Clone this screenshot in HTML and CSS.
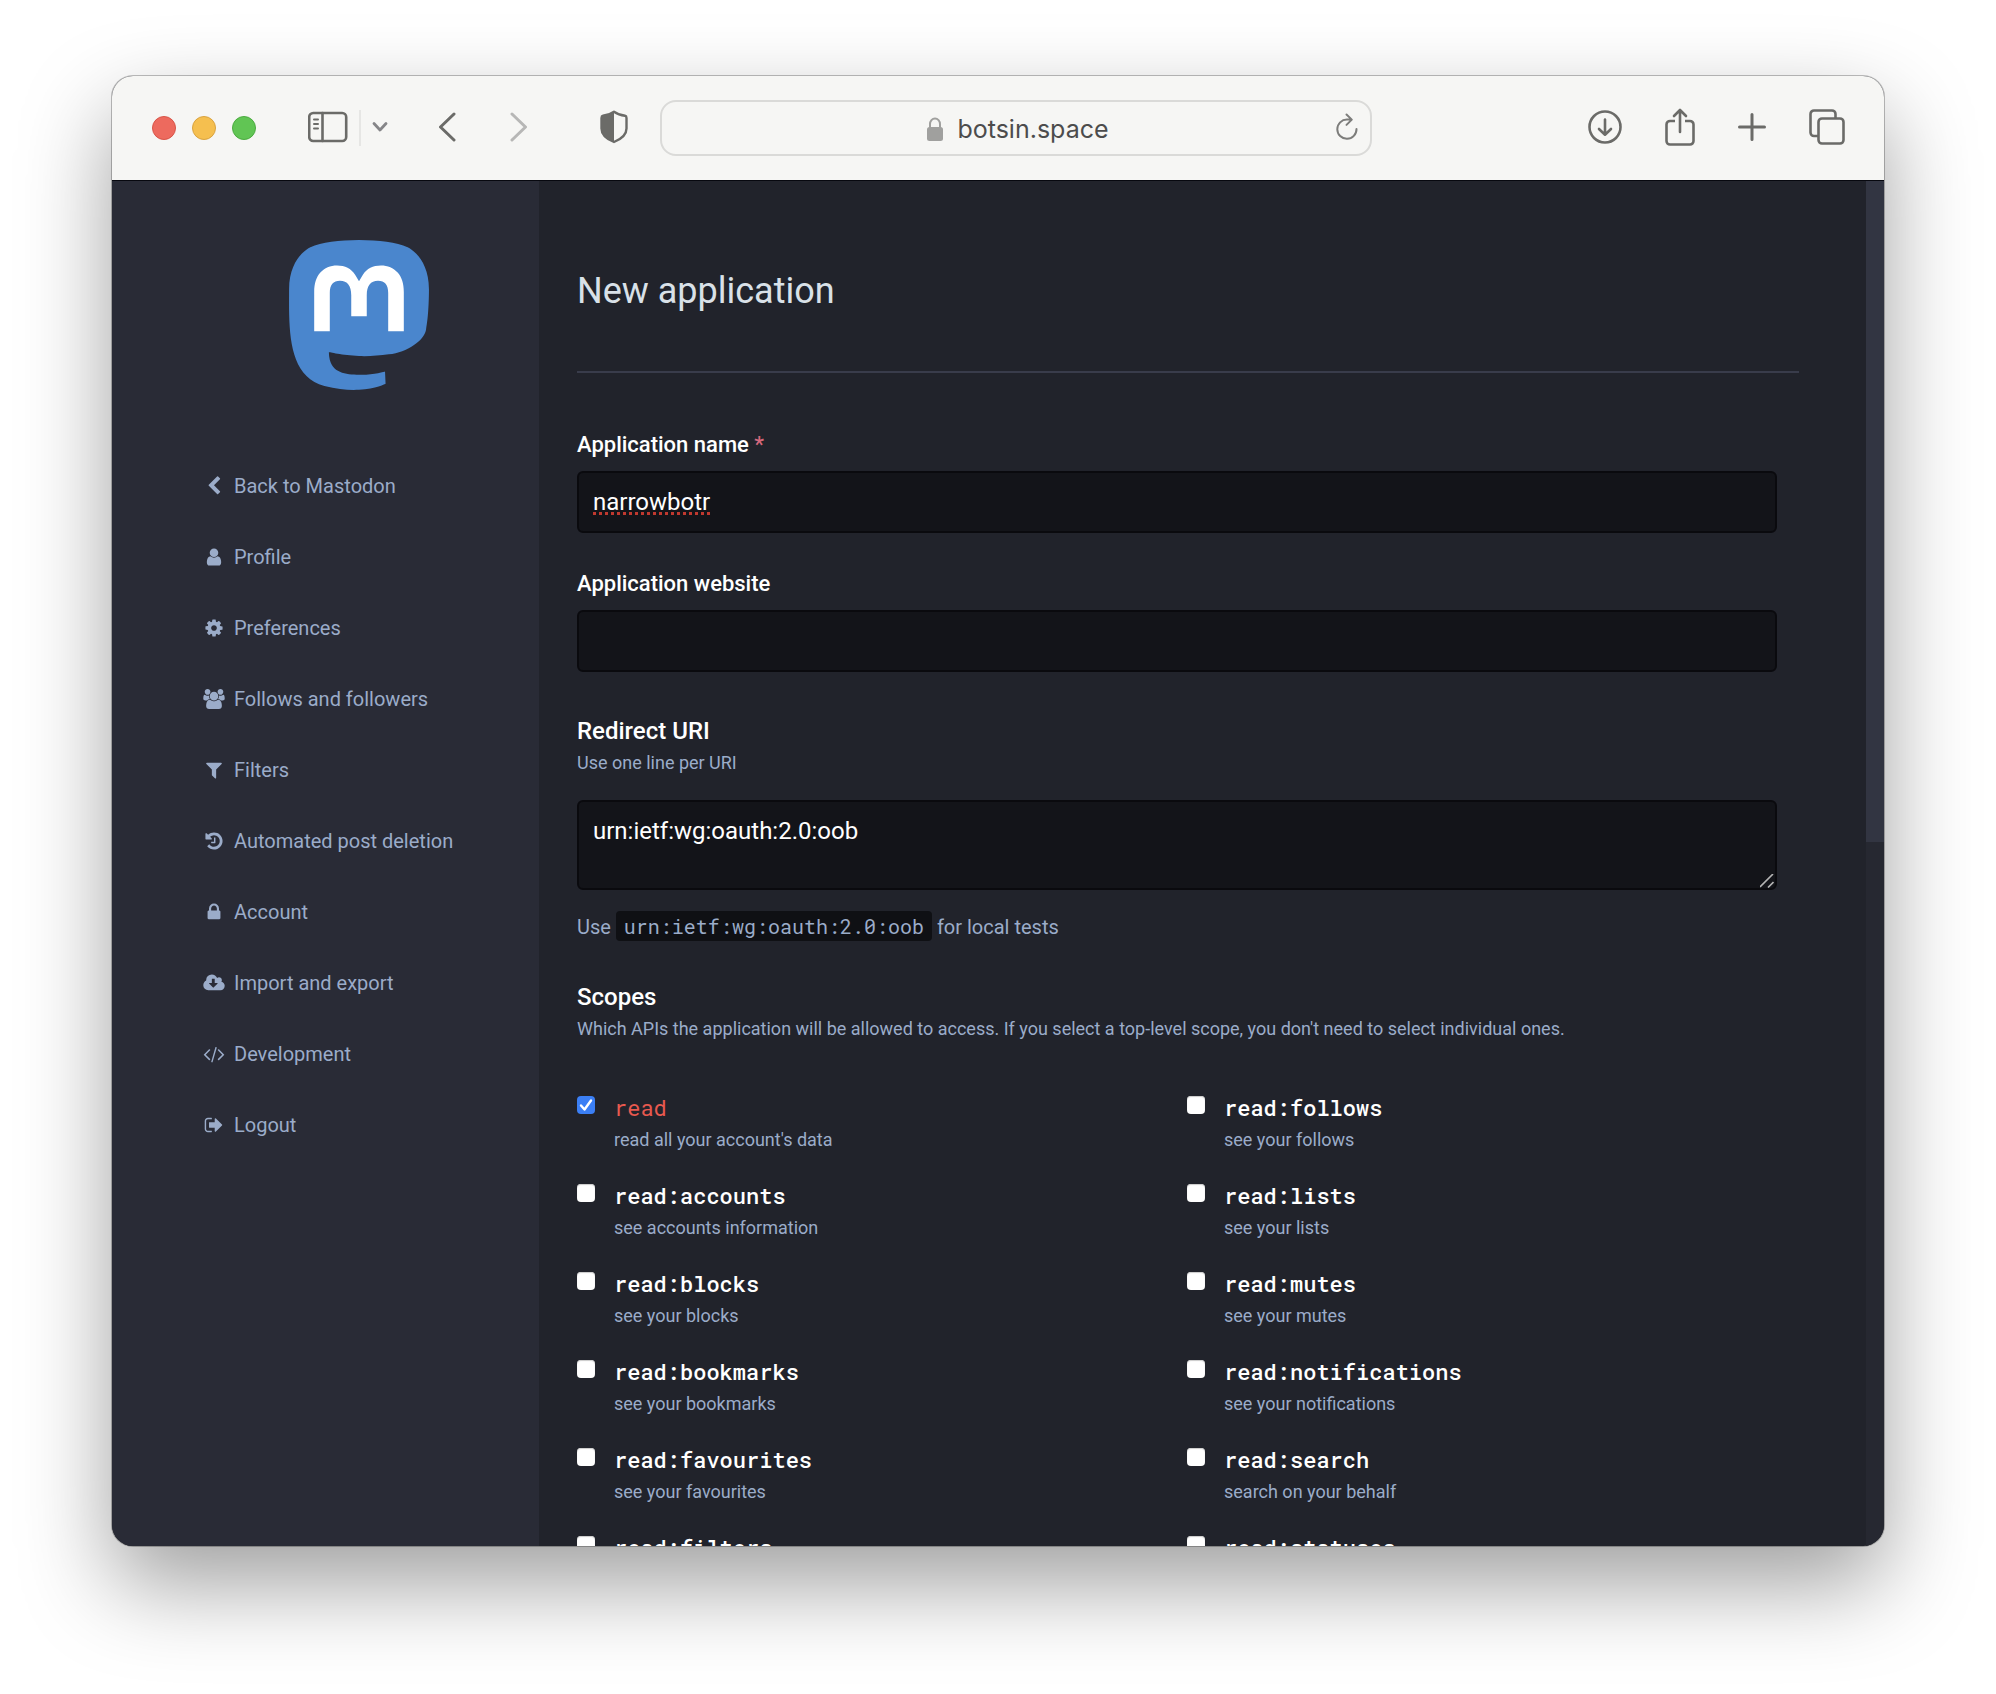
FILE: index.html
```html
<!DOCTYPE html>
<html lang="en">
<head>
<meta charset="utf-8">
<title>New application - botsin.space</title>
<link rel="stylesheet" href="styles.css">
</head>
<body>
<div class="window">
  <header class="toolbar">
    <div class="lights"><span class="light close"></span><span class="light minimise"></span><span class="light maximise"></span></div>
    <div class="side-tools">
      <button type="button" class="tool" aria-label="Show sidebar"><svg width="40" height="32" viewBox="0 0 40 32" fill="none" stroke="currentColor" stroke-width="2.6" stroke-linecap="round"><rect x="1.2" y="2" width="37" height="28" rx="4"/><path d="M14.5 2v28"/><path stroke-width="2" d="M6 8.500h4M6 13h4M6 17.500h4"/></svg></button>
      <span class="divider"></span>
      <button type="button" class="tool soft" aria-label="Tab groups"><svg width="16" height="12" viewBox="0 0 16 12" fill="none" stroke="currentColor" stroke-width="2.8" stroke-linecap="round" stroke-linejoin="round"><path d="M2 2.500l6 6.500 6-6.500"/></svg></button>
    </div>
    <div class="history">
      <button type="button" class="tool" aria-label="Back"><svg width="18" height="32" viewBox="0 0 18 32" fill="none" stroke="currentColor" stroke-width="3" stroke-linecap="round" stroke-linejoin="round"><path d="M16 3L2.500 16 16 29"/></svg></button>
      <button type="button" class="tool faded" aria-label="Forward"><svg width="18" height="32" viewBox="0 0 18 32" fill="none" stroke="currentColor" stroke-width="3" stroke-linecap="round" stroke-linejoin="round"><path d="M2 3L15.500 16 2 29"/></svg></button>
    </div>
    <button type="button" class="tool" aria-label="Privacy report"><svg width="28" height="34" viewBox="0 0 28 34"><path d="M14 1.800C11 4 6 5.500 3 5.800 1.900 6 1.500 6.700 1.500 8v10.500c0 6 5 10.500 12.500 13.500 7.500-3 12.500-7.500 12.500-13.500V8c0-1.300-.4-2-1.500-2.200C22 5.500 17 4 14 1.800z" fill="none" stroke="currentColor" stroke-width="2.400" stroke-linejoin="round"/><path d="M14 1.800C11 4 6 5.500 3 5.800 1.900 6 1.500 6.700 1.500 8v10.500c0 6 5 10.500 12.500 13.500z" fill="currentColor"/></svg></button>
    <div class="address">
      <span class="site"><svg width="16" height="24" viewBox="0 0 16 24"><rect y="10" width="16" height="14" rx="2.500" fill="#a0a09e"/><path d="M3 11V7a5 5.500 0 0 1 10 0v4" fill="none" stroke="#a0a09e" stroke-width="2"/></svg>botsin.space</span>
      <button type="button" class="tool reload" aria-label="Reload"><svg width="22" height="28" viewBox="0 0 22 28" fill="none" stroke="currentColor" stroke-width="2" stroke-linecap="round" stroke-linejoin="round"><path d="M20.500 16A9.600 9.600 0 1 1 11 6.600h4.500M10.500 1.500l5.300 5.100-5.300 5.300"/></svg></button>
    </div>
    <div class="actions">
      <button type="button" class="tool" aria-label="Downloads"><svg width="34" height="34" viewBox="0 0 34 34" fill="none" stroke="currentColor" stroke-width="2.600" stroke-linecap="round" stroke-linejoin="round"><circle cx="17" cy="17" r="15.500"/><path d="M17 9.500v15M11 19l6 5.700 6-5.700"/></svg></button>
      <button type="button" class="tool" aria-label="Share"><svg width="30" height="38" viewBox="0 0 30 38" fill="none" stroke="currentColor" stroke-width="2.600" stroke-linecap="round" stroke-linejoin="round"><path stroke-linecap="butt" d="M10 13H5a3.500 3.500 0 0 0-3.500 3.500v16.500A3.500 3.500 0 0 0 5 36.500h20a3.500 3.500 0 0 0 3.500-3.500v-16.500A3.500 3.500 0 0 0 25 13h-5"/><path d="M15 2v22M9 8l6-6 6 6"/></svg></button>
      <button type="button" class="tool" aria-label="New tab"><svg width="28" height="28" viewBox="0 0 28 28" fill="none" stroke="currentColor" stroke-width="3" stroke-linecap="round"><path d="M14 1.500v25M1.500 14h25"/></svg></button>
      <button type="button" class="tool" aria-label="Show all tabs"><svg width="36" height="36" viewBox="0 0 36 36" fill="none" stroke="currentColor" stroke-width="2.600"><rect x="9.500" y="9.500" width="25" height="25" rx="3.500"/><path d="M9.500 27H5a3.500 3.500 0 0 1-3.500-3.500V5A3.500 3.500 0 0 1 5 1.500h18A3.500 3.500 0 0 1 26.500 5v4.500"/></svg></button>
    </div>
  </header>
  <div class="page">
    <aside class="sidebar">
      <div class="sidebar-inner">
        <a class="logo" href="#" aria-label="Mastodon"><svg width="140" height="150" viewBox="0 0 216.4144 232.00976"><path fill="#4a86cd" d="M211.80734 139.0875c-3.18125 16.36625-28.4925 34.2775-57.5625 37.74875-15.15875 1.80875-30.08375 3.47125-45.99875 2.74125-26.0275-1.1925-46.565-6.2125-46.565-6.2125 0 2.53375.15625 4.94625.46875 7.2025 3.38375 25.68625 25.47 27.225 46.39125 27.9425 21.11625.7225 39.91875-5.20625 39.91875-5.20625l.8675 19.09s-14.77 7.93125-41.08125 9.39c-14.50875.7975-32.52375-.365-53.50625-5.91875C9.23234 213.82 1.40609 165.31125.20859 116.09125c-.365-14.61375-.14-28.39375-.14-39.91875 0-50.33 32.97625-65.0825 32.97625-65.0825C49.67234 3.45375 78.20359.2425 107.86484 0h.72875c29.66125.2425 58.21125 3.45375 74.8375 11.09 0 0 32.975 14.7525 32.975 65.0825 0 0 .41375 37.13375-4.59875 62.915"/><path fill="#fff" d="M177.50984 80.077v60.94125h-24.14375v-59.15c0-12.46875-5.24625-18.7975-15.74-18.7975-11.6025 0-17.4175 7.5075-17.4175 22.3525v32.37625H96.20734V85.42325c0-14.845-5.81625-22.3525-17.41875-22.3525-10.49375 0-15.74 6.32875-15.74 18.7975v59.15H38.90484V80.077c0-12.455 3.17125-22.3525 9.54125-29.675 6.56875-7.3225 15.17125-11.07625 25.85-11.07625 12.355 0 21.71125 4.74875 27.8975 14.2475l6.01375 10.08125 6.015-10.08125c6.185-9.49875 15.54125-14.2475 27.8975-14.2475 10.6775 0 19.28 3.75375 25.85 11.07625 6.36875 7.3225 9.54 17.22 9.54 29.675"/></svg></a>
        <nav class="menu">
          <a href="#"><svg viewBox="-64 0 1920 1792"><path d="M1427 301l-531 531 531 531q19 19 19 45t-19 45l-166 166q-19 19-45 19t-45-19l-742-742q-19-19-19-45t19-45l742-742q19-19 45-19t45 19l166 166q19 19 19 45t-19 45z"/></svg>Back to Mastodon</a>
          <a href="#"><svg viewBox="-64 0 1920 1792"><path d="M1536 1399q0 109-62.5 187t-150.5 78h-854q-88 0-150.5-78t-62.500-187q0-85 8.500-160.500t31.500-152 58.500-131 94-89 134.500-34.500q131 128 313 128t313-128q76 0 134.500 34.500t94 89 58.500 131 31.500 152 8.500 160.500zm-256-887q0 159-112.500 271.500t-271.500 112.500-271.500-112.500-112.500-271.500 112.500-271.500 271.500-112.500 271.500 112.500 112.500 271.500z"/></svg>Profile</a>
          <a href="#"><svg viewBox="-64 0 1920 1792"><path d="M1152 896q0-106-75-181t-181-75-181 75-75 181 75 181 181 75 181-75 75-181zm512-109v222q0 12-8 23t-20 13l-185 28q-19 54-39 91 35 50 107 138 10 12 10 25t-9 23q-27 37-99 108t-94 71q-12 0-26-9l-138-108q-44 23-91 38-16 136-29 186-7 28-36 28h-222q-14 0-24.500-8.500t-11.500-21.500l-28-184q-49-16-90-37l-141 107q-10 9-25 9-14 0-25-11-126-114-165-168-7-10-7-23 0-12 8-23 15-21 51-66.500t54-70.500q-27-50-41-99l-183-27q-13-2-21-12.500t-8-23.500v-222q0-12 8-23t19-13l186-28q14-46 39-92-40-57-107-138-10-12-10-24 0-10 9-23 26-36 98.500-107.500t94.500-71.500q13 0 26 10l138 107q44-23 91-38 16-136 29-186 7-28 36-28h222q14 0 24.500 8.500t11.500 21.500l28 184q49 16 90 37l142-107q9-9 24-9 13 0 25 10 129 119 165 170 7 8 7 22 0 12-8 23-15 21-51 66.500t-54 70.500q26 50 41 98l183 28q13 2 21 12.500t8 23.500z"/></svg>Preferences</a>
          <a href="#"><svg viewBox="0 0 1920 1792"><path d="M593 896q-162 5-265 128h-134q-82 0-138-40.500t-56-118.500q0-353 124-353 6 0 43.500 21t97.500 42.500 119 21.500q67 0 133-23-5 37-5 66 0 139 81 256zm1071 637q0 120-73 189.500t-194 69.500h-874q-121 0-194-69.500t-73-189.500q0-53 3.500-103.500t14-109 26.500-108.500 43-97.500 62-81 85.500-53.500 111.500-20q10 0 43 21.500t73 48 107 48 135 21.500 135-21.500 107-48 73-48 43-21.500q61 0 111.500 20t85.500 53.500 62 81 43 97.500 26.500 108.500 14 109 3.500 103.500zm-1024-1277q0 106-75 181t-181 75-181-75-75-181 75-181 181-75 181 75 75 181zm704 384q0 159-112.500 271.500t-271.500 112.500-271.500-112.500-112.500-271.500 112.500-271.500 271.500-112.500 271.500 112.500 112.500 271.500zm576 225q0 78-56 118.500t-138 40.500h-134q-103-123-265-128 81-117 81-256 0-29-5-66 66 23 133 23 59 0 119-21.500t97.500-42.500 43.500-21q124 0 124 353zm-128-609q0 106-75 181t-181 75-181-75-75-181 75-181 181-75 181 75 75 181z"/></svg>Follows and followers</a>
          <a href="#"><svg viewBox="-64 0 1920 1792"><path d="M1595 295q17 41-14 70l-493 493v742q0 42-39 59-13 5-25 5-27 0-45-19l-256-256q-19-19-19-45v-486l-493-493q-31-29-14-70 17-39 59-39h1280q42 0 59 39z"/></svg>Filters</a>
          <a href="#"><svg viewBox="-64 0 1920 1792"><path d="M1664 896q0 156-61 298t-164 245-245 164-298 61q-172 0-327-72.500t-264-204.500q-7-10-6.500-22.500t8.500-20.500l137-138q10-9 25-9 16 2 23 12 73 95 179 147t225 52q104 0 198.500-40.500t163.500-109.500 109.500-163.500 40.500-198.500-40.500-198.500-109.500-163.500-163.500-109.500-198.500-40.500q-98 0-188 35.500t-160 101.500l137 138q31 30 14 69-17 40-59 40h-448q-26 0-45-19t-19-45v-448q0-42 40-59 39-17 69 14l130 129q107-101 244.500-156.500t284.500-55.500q156 0 298 61t245 164 164 245 61 298zm-640-288v448q0 14-9 23t-23 9h-320q-14 0-23-9t-9-23v-64q0-14 9-23t23-9h224v-352q0-14 9-23t23-9h64q14 0 23 9t9 23z"/></svg>Automated post deletion</a>
          <a href="#"><svg viewBox="-64 0 1920 1792"><path d="M640 768h512v-192q0-106-75-181t-181-75-181 75-75 181v192zm832 96v576q0 40-28 68t-68 28h-960q-40 0-68-28t-28-68v-576q0-40 28-68t68-28h32v-192q0-184 132-316t316-132 316 132 132 316v192h32q40 0 68 28t28 68z"/></svg>Account</a>
          <a href="#"><svg viewBox="0 0 1920 1792"><path d="M1280 928q0-14-9-23t-23-9h-224v-352q0-13-9.500-22.500t-22.500-9.500h-192q-13 0-22.500 9.500t-9.500 22.500v352h-224q-13 0-22.500 9.500t-9.500 22.500q0 14 9 23l352 352q9 9 23 9t23-9l351-351q10-12 10-24zm640 224q0 159-112.500 271.500t-271.500 112.500h-1088q-185 0-316.500-131.500t-131.500-316.500q0-130 70-240t188-165q-2-30-2-43 0-212 150-362t362-150q156 0 285.500 87t188.500 231q71-62 166-62 106 0 181 75t75 181q0 76-41 138 130 31 213.500 135.500t83.500 238.500z"/></svg>Import and export</a>
          <a href="#"><svg viewBox="0 0 1920 1792"><path d="M617 1399l-50 50q-10 10-23 10t-23-10l-466-466q-10-10-10-23t10-23l466-466q10-10 23-10t23 10l50 50q10 10 10 23t-10 23l-393 393 393 393q10 10 10 23t-10 23zm591-1067l-373 1291q-4 13-15.500 19.500t-23.500 2.500l-62-17q-13-4-19.500-15.500t-2.500-24.500l373-1291q4-13 15.500-19.500t23.500-2.500l62 17q13 4 19.500 15.500t2.500 24.500zm657 651l-466 466q-10 10-23 10t-23-10l-50-50q-10-10-10-23t10-23l393-393-393-393q-10-10-10-23t10-23l50-50q10-10 23-10t23 10l466 466q10 10 10 23t-10 23z"/></svg>Development</a>
          <a href="#"><svg viewBox="-64 0 1920 1792"><path d="M704 1440q0 4 1 20t.5 26.500-3 23.500-10 19.500-20.500 6.500h-320q-119 0-203.500-84.500t-84.500-203.500v-704q0-119 84.500-203.500t203.500-84.500h320q13 0 22.500 9.500t9.500 22.500q0 4 1 20t.5 26.500-3 23.500-10 19.500-20.500 6.500h-320q-66 0-113 47t-47 113v704q0 66 47 113t113 47h312l11.500 1 11.500 3 8 5.500 7 9 2 13.500zm928-544q0 26-19 45l-544 544q-19 19-45 19t-45-19-19-45v-288h-448q-26 0-45-19t-19-45v-384q0-26 19-45t45-19h448v-288q0-26 19-45t45-19 45 19l544 544q19 19 19 45z"/></svg>Logout</a>
        </nav>
      </div>
    </aside>
    <main class="content">
      <h1>New application</h1>
      <form class="form">
        <div class="field">
          <label for="app-name">Application name <abbr title="required">*</abbr></label>
          <input class="box misspelt" id="app-name" type="text" value="narrowbotr" spellcheck="false">
        </div>
        <div class="field">
          <label for="app-site">Application website</label>
          <input class="box" id="app-site" type="text">
        </div>
        <div class="block">
          <label class="heading" for="redirect">Redirect URI</label>
          <p class="hint">Use one line per URI</p>
          <div class="area">
            <textarea class="box" id="redirect" spellcheck="false">urn:ietf:wg:oauth:2.0:oob</textarea>
            <svg class="grip" width="14" height="14" viewBox="0 0 14 14" stroke="#b4b4b4" stroke-width="1.600"><path d="M0 13L13 0M8 13.500L13.500 8"/></svg>
          </div>
          <p class="note">Use <code>urn:ietf:wg:oauth:2.0:oob</code> for local tests</p>
        </div>
        <fieldset>
          <legend class="heading">Scopes</legend>
          <p class="hint">Which APIs the application will be allowed to access. If you select a top-level scope, you don't need to select individual ones.</p>
          <div class="scope-grid">
            <div class="scope"><input type="checkbox" id="s1" checked><div><label class="broad" for="s1">read</label><p class="hint">read all your account's data</p></div></div>
            <div class="scope"><input type="checkbox" id="s2"><div><label for="s2">read:accounts</label><p class="hint">see accounts information</p></div></div>
            <div class="scope"><input type="checkbox" id="s3"><div><label for="s3">read:blocks</label><p class="hint">see your blocks</p></div></div>
            <div class="scope"><input type="checkbox" id="s4"><div><label for="s4">read:bookmarks</label><p class="hint">see your bookmarks</p></div></div>
            <div class="scope"><input type="checkbox" id="s5"><div><label for="s5">read:favourites</label><p class="hint">see your favourites</p></div></div>
            <div class="scope"><input type="checkbox" id="s6"><div><label for="s6">read:filters</label></div></div>
            <div class="scope"><input type="checkbox" id="s7"><div><label for="s7">read:follows</label><p class="hint">see your follows</p></div></div>
            <div class="scope"><input type="checkbox" id="s8"><div><label for="s8">read:lists</label><p class="hint">see your lists</p></div></div>
            <div class="scope"><input type="checkbox" id="s9"><div><label for="s9">read:mutes</label><p class="hint">see your mutes</p></div></div>
            <div class="scope"><input type="checkbox" id="s10"><div><label for="s10">read:notifications</label><p class="hint">see your notifications</p></div></div>
            <div class="scope"><input type="checkbox" id="s11"><div><label for="s11">read:search</label><p class="hint">search on your behalf</p></div></div>
            <div class="scope"><input type="checkbox" id="s12"><div><label for="s12">read:statuses</label></div></div>
          </div>
        </fieldset>
      </form>
    </main>
    <div class="track"><div class="thumb"></div></div>
  </div>
</div>
</body>
</html>
```
FILE: styles.css
```css
* { box-sizing: border-box; }

body {
  margin: 0;
  height: 100vh;
  padding: 76px 112px 148px;
  display: flex;
  background: #fff;
  font-family: Roboto, "Liberation Sans", sans-serif;
  font-size: 20px;
  overflow: hidden;
}

h1, p, fieldset, legend { margin: 0; padding: 0; border: 0; }

.window {
  flex: 1;
  min-width: 0;
  display: flex;
  flex-direction: column;
  border-radius: 21px;
  overflow: hidden;
  background: #21232b;
  box-shadow: 0 0 0 1px rgba(0, 0, 0, .25), 0 38px 90px rgba(0, 0, 0, .38);
}

/* Browser toolbar */
.toolbar {
  flex: none;
  height: 104px;
  display: flex;
  align-items: center;
  padding: 0 39px 0 40px;
  background: #f6f6f4;
}

.tool {
  display: flex;
  margin: 0 0 2px;
  padding: 0;
  border: 0;
  background: none;
  color: #6b6b68;
}

.tool.soft { color: #858588; }
.tool.faded { color: #b7b7b6; }

.lights { display: flex; gap: 16px; margin-right: 52px; }

.light {
  width: 24px;
  height: 24px;
  border-radius: 50%;
  border: 1px solid;
}

.close { background: #ed6a5e; border-color: #d85548; }
.minimise { background: #f5bf4f; border-color: #d9a340; }
.maximise { background: #61c554; border-color: #4cab40; }

.side-tools { display: flex; align-items: center; gap: 11px; margin-right: 50px; }

.divider { width: 2px; height: 36px; background: #e6e6e4; }

.history { display: flex; gap: 54px; margin-right: 72px; }

.address {
  flex: 1;
  height: 56px;
  display: flex;
  align-items: center;
  margin: 0 216px 0 32px;
  padding-right: 12px;
  border: 2px solid #dadad8;
  border-radius: 16px;
}

.site {
  flex: 1;
  display: flex;
  align-items: center;
  justify-content: center;
  gap: 14px;
  padding: 2px 0 0 38px;
  font-family: Inter, sans-serif;
  font-size: 25px;
  line-height: 32px;
  color: #4c4c4c;
}

.reload { color: #7d7d7b; }

.actions { display: flex; align-items: center; gap: 43px; }

/* Settings page */
.page {
  flex: 1;
  min-height: 0;
  display: flex;
  border-top: 1px solid #07080f;
}

.sidebar {
  flex: none;
  width: 427px;
  display: flex;
  justify-content: flex-end;
  background: #292b36;
}

.sidebar-inner { width: 360px; padding-top: 59px; }

.logo { display: flex; justify-content: center; margin-bottom: 60px; }

.menu a {
  display: flex;
  align-items: center;
  gap: 9px;
  height: 71px;
  padding-left: 24px;
  color: #9bacc9;
  text-decoration: none;
}

.menu svg { width: 22px; height: 20px; fill: currentColor; }

.content { flex: 1; min-width: 0; padding: 89px 67px 0 38px; overflow: hidden; }

h1 {
  padding-bottom: 59px;
  margin-bottom: 57px;
  border-bottom: 2px solid #393c4b;
  font-size: 36px;
  line-height: 42px;
  font-weight: 400;
  color: #d9e1e8;
}

.form { padding-right: 22px; }

.field { margin-bottom: 36px; }

.field label {
  display: block;
  margin-bottom: 11px;
  font-size: 22px;
  line-height: 30px;
  font-weight: 500;
  color: #fff;
}

abbr { color: #d4687c; text-decoration: none; }

.box {
  display: block;
  width: 100%;
  height: 62px;
  padding: 14px;
  border: 2px solid #0a0a0e;
  border-radius: 6px;
  outline: 0;
  background: #131419;
  font-family: inherit;
  font-size: 24px;
  line-height: 30px;
  color: #fff;
  resize: none;
}

.misspelt { text-decoration: underline dotted #c0392f 3px; text-underline-offset: 2px; text-decoration-skip-ink: none; }

.block { padding-top: 8px; }

.heading {
  display: block;
  font-size: 24px;
  line-height: 30px;
  font-weight: 500;
  color: #fff;
}

.hint { font-size: 18px; line-height: 34px; color: #9bacc9; }

.area { position: relative; margin: 20px 0 21px; }

.area .box { height: 90px; }

.grip { position: absolute; right: 3px; bottom: 2px; }

.note { margin-bottom: 40px; line-height: 30px; color: #9bacc9; }

code {
  display: inline-block;
  padding: 0 8px;
  border-radius: 4px;
  background: #0f1014;
  font-family: "Roboto Mono", "DejaVu Sans Mono", monospace;
  font-size: 20px;
}

.scope-grid {
  display: grid;
  grid-template-columns: 1fr 1fr;
  grid-template-rows: repeat(6, 64px);
  grid-auto-flow: column;
  gap: 24px 20px;
  margin-top: 47px;
}

.scope { display: flex; align-items: flex-start; gap: 19px; }

.scope input {
  appearance: none;
  flex: none;
  width: 18px;
  height: 18px;
  margin: 3px 0 0;
  border-radius: 4px;
  background: #fff;
  box-shadow: inset 0 1px 1px #c9c9c9;
}

.scope input:checked {
  background: url("data:image/svg+xml,%3Csvg xmlns='http://www.w3.org/2000/svg' viewBox='0 0 18 18'%3E%3Cpath d='M4 9.500l3.500 4L14 4.500' fill='none' stroke='white' stroke-width='2.400' stroke-linecap='round' stroke-linejoin='round'/%3E%3C/svg%3E") #3b7ff5;
  box-shadow: none;
}

.scope label {
  display: block;
  font-family: "Roboto Mono", "DejaVu Sans Mono", monospace;
  font-size: 22px;
  line-height: 30px;
  font-weight: 500;
  color: #fff;
}

.scope .broad { font-weight: 400; color: #e8594f; }

.track { flex: none; width: 18px; background: #262831; }

.thumb { height: 48.4%; background: #323542; }
```
